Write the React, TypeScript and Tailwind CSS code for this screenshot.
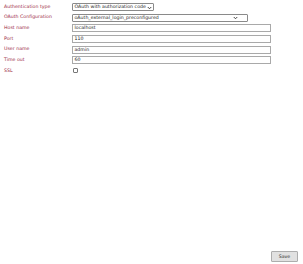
import React from "react";

const Row = ({ label, children }: { label: string; children: React.ReactNode }) => (
  <div className="flex h-[10.67px] items-center">
    <div className="w-[68px] shrink-0 text-[#9c2a44]">{label}</div>
    {children}
  </div>
);

const Input = ({ value }: { value: string }) => (
  <div className="flex h-[8px] w-[199px] items-center border border-[#a9a9a9] bg-white pl-[1.5px] pt-[1px] text-[#222]">
    {value}
  </div>
);

const Chevron = () => (
  <svg width="5" height="4" viewBox="0 0 10 8" className="shrink-0">
    <path d="M1.5 2 L5 5.5 L8.5 2" fill="none" stroke="#333" strokeWidth="1.8" />
  </svg>
);

export default function App() {
  return (
    <div
      className="flex h-[264px] w-[303px] flex-col bg-white pl-[4px] pt-[1.7px] text-[4.7px] leading-none"
      style={{ fontFamily: '"DejaVu Sans", Verdana, sans-serif' }}
    >
      <Row label="Authentication type">
        <div className="flex h-[8px] w-[82px] items-center justify-between rounded-[1px] border border-[#8a8a8a] bg-white px-[1.5px] pt-[1px] text-[#222]">
          <span>OAuth with authorization code</span>
          <Chevron />
        </div>
      </Row>
      <Row label="OAuth Configuration">
        <div className="flex h-[8px] w-[176px] items-center justify-between rounded-[1px] border border-[#8a8a8a] bg-white px-[1.5px] pt-[1px] text-[#222]">
          <span>oAuth_external_login_preconfigured</span>
          <span className="mr-[8px]">
            <Chevron />
          </span>
        </div>
      </Row>
      <Row label="Host name">
        <Input value="localhost" />
      </Row>
      <Row label="Port">
        <Input value="110" />
      </Row>
      <Row label="User name">
        <Input value="admin" />
      </Row>
      <Row label="Time out">
        <Input value="60" />
      </Row>
      <Row label="SSL">
        <div className="ml-[1px] h-[5px] w-[5px] rounded-[1px] border border-[#777] bg-white" />
      </Row>
      <div className="mt-auto mb-[2px] mr-[5px] flex justify-end">
        <div className="flex h-[11px] w-[27px] items-center justify-center rounded-[1px] border border-[#adadad] bg-[#e1e1e1] pt-[1px] text-[#333]">
          Save
        </div>
      </div>
    </div>
  );
}
